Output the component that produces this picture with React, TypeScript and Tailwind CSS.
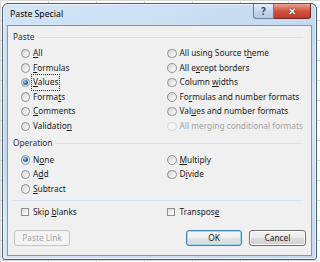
import clsx from "clsx";

const font = "font-['Segoe_UI','Noto_Sans','Open_Sans',sans-serif]";

function Label({ text, disabled }: { text: string; disabled?: boolean }) {
  const i = text.indexOf("&");
  const plain = text.replace("&", "");
  return (
    <span className={clsx("whitespace-nowrap leading-none", disabled ? "text-[#a3a3a3]" : "text-[#1b1b1b]")}>
      {i < 0 ? (
        plain
      ) : (
        <>
          {plain.slice(0, i)}
          <span className="underline underline-offset-1">{plain[i]}</span>
          {plain.slice(i + 1)}
        </>
      )}
    </span>
  );
}

function Radio({ checked, disabled }: { checked?: boolean; disabled?: boolean }) {
  return (
    <span
      className={clsx(
        "flex h-[9.5px] w-[9.5px] shrink-0 items-center justify-center rounded-full border",
        disabled
          ? "border-[#d2d2d2] bg-[#f5f5f5]"
          : "border-[#8c8e90] bg-[linear-gradient(135deg,#d4d4d4,#ffffff)]"
      )}
    >
      {checked && (
        <span className="h-[5px] w-[5px] rounded-full bg-[radial-gradient(circle_at_35%_35%,#8fd0f7,#1a6bb0_55%,#0b3f75)]" />
      )}
    </span>
  );
}

function Check() {
  return (
    <span className="h-[8px] w-[8px] shrink-0 border border-[#8e8f8f] bg-[linear-gradient(135deg,#dedede,#ffffff)]" />
  );
}

function Option({
  text,
  checked,
  disabled,
  focus,
}: {
  text: string;
  checked?: boolean;
  disabled?: boolean;
  focus?: boolean;
}) {
  return (
    <div className="flex h-[14.6px] items-center">
      <div className="flex w-[11.5px]">
        <Radio checked={checked} disabled={disabled} />
      </div>
      <div className={clsx("px-[1px] py-[1px]", focus ? "outline outline-1 outline-dotted outline-[#333]" : "")}>
        <Label text={text} disabled={disabled} />
      </div>
    </div>
  );
}

function Heading({ text }: { text: string }) {
  return (
    <div className="flex h-[12px] items-center gap-[3px] pr-[4px]">
      <span className="leading-none text-[#1e2f4c]">{text}</span>
      <span className="h-px flex-1 bg-[#dbe3ea]" />
    </div>
  );
}

export default function App() {
  return (
    <div
      className={clsx(
        "h-[262px] w-[320px] overflow-hidden bg-white bg-[linear-gradient(to_right,#d9d9d9_1px,transparent_1px),linear-gradient(to_bottom,#d9d9d9_1px,transparent_1px)] bg-[size:48px_20px] pl-[2px] pt-[3px] text-[8.3px]",
        font
      )}
    >
      <div className="flex h-[257px] w-[315px] flex-col rounded-t-[6px] rounded-b-[3px] border border-[#4b5b70] bg-[linear-gradient(160deg,#d4e5f6,#c2d8ef_40%,#d8e7f6_60%,#c4d9ef)] px-[4px] pb-[3px] shadow-[inset_0_0_0_1px_rgba(255,255,255,0.6)]">
        <div className="flex h-[21px] items-start">
          <div className="mt-[6px] flex-1 pl-[3px] text-[8.7px] leading-none text-black">Paste Special</div>
          <div className="mr-[1px] flex h-[15px]">
            <div className="flex w-[21px] items-center justify-center rounded-bl-[3px] border border-t-0 border-[#6b7f97] bg-[linear-gradient(180deg,#e4eef9,#c5d7ea_50%,#b2c8e0)] text-[10px] font-bold leading-none text-[#3f4d5f]">
              ?
            </div>
            <div className="flex w-[37px] items-center justify-center rounded-br-[3px] border border-l-0 border-t-0 border-[#6b2a22] bg-[linear-gradient(180deg,#e8a493,#d2553f_50%,#c23a25)] text-[10px] font-bold leading-none text-white [text-shadow:0_0_1px_#3a0d07,0_0_1px_#3a0d07]">
              ✕
            </div>
          </div>
        </div>
        <div className="flex flex-1 flex-col border border-[#8596ab] bg-[#f0f0f0] pl-[5px] pr-[4px]">
          <div className="mt-[5px]">
            <Heading text="Paste" />
          </div>
          <div className="mt-[3px] grid grid-cols-[146.5px_1fr] pl-[7.5px]">
            <div>
              <Option text="&All" />
              <Option text="&Formulas" />
              <Option text="&Values" checked focus />
              <Option text="Forma&ts" />
              <Option text="&Comments" />
              <Option text="Validatio&n" />
            </div>
            <div>
              <Option text="All using Source t&heme" />
              <Option text="All e&xcept borders" />
              <Option text="Column &widths" />
              <Option text="Fo&rmulas and number formats" />
              <Option text="Val&ues and number formats" />
              <Option text="All mer&ging conditional formats" disabled />
            </div>
          </div>
          <div className="mt-[4px]">
            <Heading text="Operation" />
          </div>
          <div className="mt-[3px] grid grid-cols-[146.5px_1fr] pl-[7.5px]">
            <div>
              <Option text="N&one" checked />
              <Option text="A&dd" />
              <Option text="&Subtract" />
            </div>
            <div>
              <Option text="&Multiply" />
              <Option text="D&ivide" />
            </div>
          </div>
          <div className="mr-[4px] mt-[4px] h-px bg-[#dbe3ea]" />
          <div className="mt-[4px] grid grid-cols-[146.5px_1fr] pl-[7.5px]">
            <div className="flex h-[14px] items-center gap-[4.5px]">
              <Check />
              <Label text="Skip &blanks" />
            </div>
            <div className="flex h-[14px] items-center gap-[4.5px]">
              <Check />
              <Label text="Transpos&e" />
            </div>
          </div>
          <div className="mt-[11px] flex pl-[1px] pr-[1px]">
            <button className="flex h-[16px] w-[56px] items-center justify-center rounded-[3px] border border-[#c4c4c4] bg-[#f4f4f4] leading-none text-[#a6a6a6]">
              Paste Link
            </button>
            <div className="flex-1" />
            <button className="flex h-[16px] w-[56px] items-center justify-center rounded-[3px] border border-[#3c7fb1] bg-[linear-gradient(180deg,#f6f6f6,#eeeeee_50%,#e3e3e3_50%,#d9d9d9)] leading-none text-[#1b1b1b] shadow-[inset_0_0_0_1px_#9fdcf7]">
              OK
            </button>
            <button className="ml-[7px] flex h-[16px] w-[57px] items-center justify-center rounded-[3px] border border-[#707070] bg-[linear-gradient(180deg,#f2f2f2,#ebebeb_50%,#dddddd_50%,#cfcfcf)] leading-none text-[#1b1b1b] shadow-[inset_0_0_0_1px_#fcfcfc]">
              Cancel
            </button>
          </div>
        </div>
      </div>
    </div>
  );
}
